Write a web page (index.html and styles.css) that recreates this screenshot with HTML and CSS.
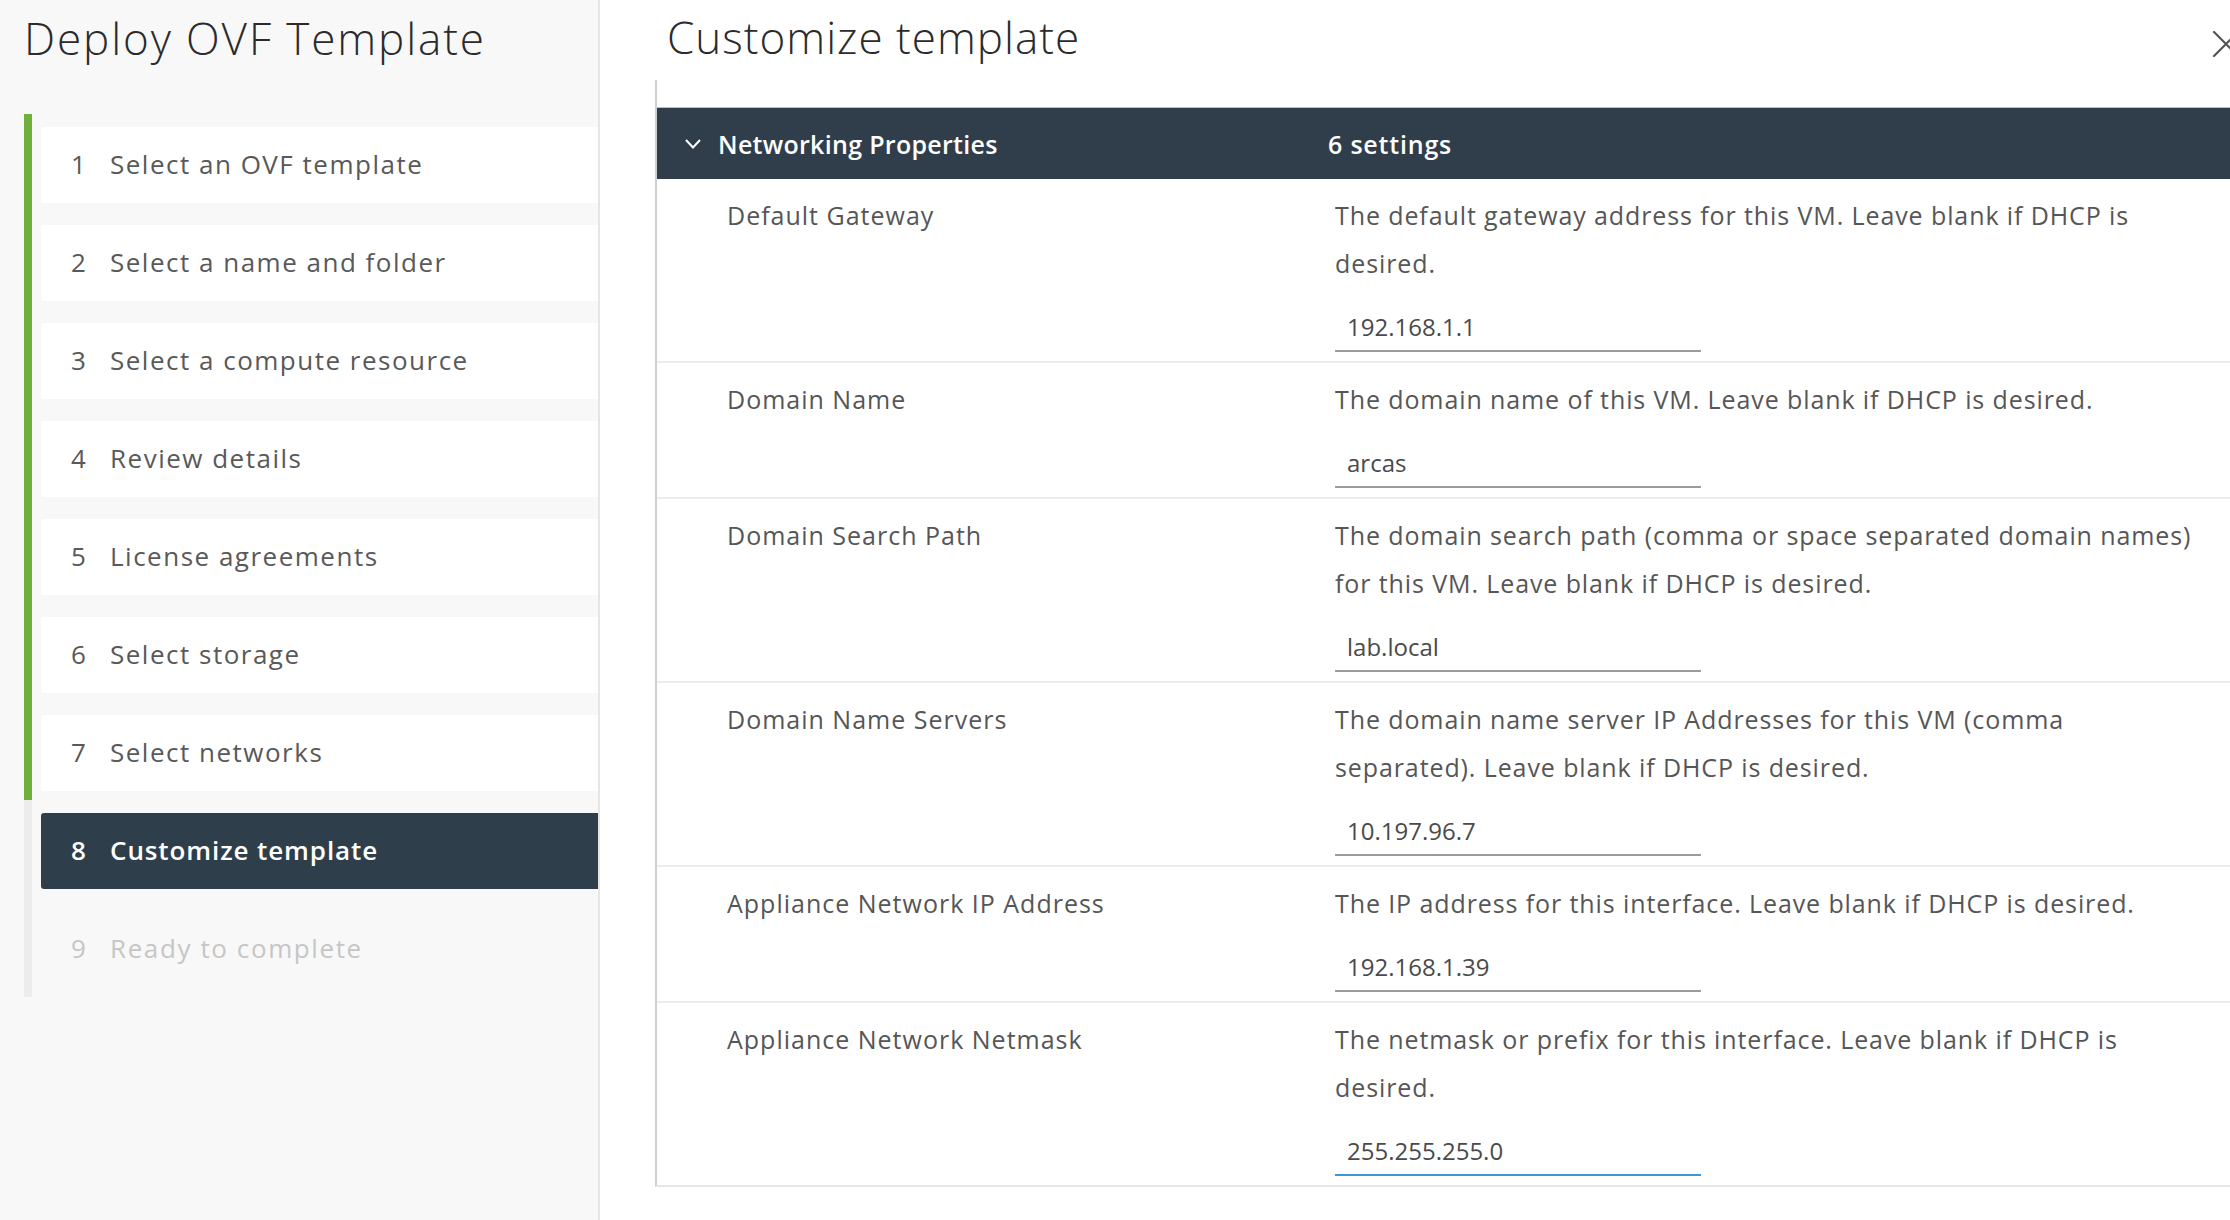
FILE: index.html
```html
<!DOCTYPE html>
<html lang="en">
<head>
<meta charset="utf-8">
<title>Deploy OVF Template</title>
<link rel="stylesheet" href="styles.css">
</head>
<body>
<div class="app">
  <aside class="sidebar">
    <h1 class="wiz-title">Deploy OVF Template</h1>
    <div class="steps">
      <div class="track"><div class="track-done"></div></div>
      <ol class="step-list">
        <li class="step"><span class="num">1</span><span>Select an OVF template</span></li>
        <li class="step"><span class="num">2</span><span>Select a name and folder</span></li>
        <li class="step"><span class="num">3</span><span>Select a compute resource</span></li>
        <li class="step"><span class="num">4</span><span>Review details</span></li>
        <li class="step"><span class="num">5</span><span>License agreements</span></li>
        <li class="step"><span class="num">6</span><span>Select storage</span></li>
        <li class="step"><span class="num">7</span><span>Select networks</span></li>
        <li class="step active"><span class="num">8</span><span>Customize template</span></li>
        <li class="step disabled"><span class="num">9</span><span>Ready to complete</span></li>
      </ol>
    </div>
  </aside>
  <main class="main">
    <div class="main-head">
      <h2 class="page-title">Customize template</h2>
      <svg class="close" width="28" height="28" viewBox="0 0 28 28" aria-label="Close">
        <path d="M2 2 L26 26 M26 2 L2 26" stroke="#555" stroke-width="2.2" fill="none" stroke-linecap="round"/>
      </svg>
    </div>
    <div class="props">
      <div class="props-head">
        <div class="ph-name">
          <svg class="chev" width="18" height="12" viewBox="0 0 18 12"><path d="M2 2 L9 9.5 L16 2" stroke="#fff" stroke-width="2" fill="none"/></svg>
          <span>Networking Properties</span>
        </div>
        <div class="ph-count">6 settings</div>
      </div>

      <div class="prop">
        <div class="p-label">Default Gateway</div>
        <div class="p-body">
          <div class="p-desc">The default gateway address for this VM. Leave blank if DHCP is<br>desired.</div>
          <input class="p-input" type="text" value="192.168.1.1">
        </div>
      </div>

      <div class="prop">
        <div class="p-label">Domain Name</div>
        <div class="p-body">
          <div class="p-desc">The domain name of this VM. Leave blank if DHCP is desired.</div>
          <input class="p-input" type="text" value="arcas">
        </div>
      </div>

      <div class="prop">
        <div class="p-label">Domain Search Path</div>
        <div class="p-body">
          <div class="p-desc">The domain search path (comma or space separated domain names)<br>for this VM. Leave blank if DHCP is desired.</div>
          <input class="p-input" type="text" value="lab.local">
        </div>
      </div>

      <div class="prop">
        <div class="p-label">Domain Name Servers</div>
        <div class="p-body">
          <div class="p-desc">The domain name server IP Addresses for this VM (comma<br>separated). Leave blank if DHCP is desired.</div>
          <input class="p-input" type="text" value="10.197.96.7">
        </div>
      </div>

      <div class="prop">
        <div class="p-label">Appliance Network IP Address</div>
        <div class="p-body">
          <div class="p-desc">The IP address for this interface. Leave blank if DHCP is desired.</div>
          <input class="p-input" type="text" value="192.168.1.39">
        </div>
      </div>

      <div class="prop">
        <div class="p-label">Appliance Network Netmask</div>
        <div class="p-body">
          <div class="p-desc">The netmask or prefix for this interface. Leave blank if DHCP is<br>desired.</div>
          <input class="p-input focused" type="text" value="255.255.255.0">
        </div>
      </div>
    </div>
  </main>
</div>
</body>
</html>
```

FILE: styles.css
```css
* { box-sizing: border-box; }

html, body {
  margin: 0;
  padding: 0;
  background: #ffffff;
  overflow: hidden;
}

body {
  font-family: "Open Sans", Lato, sans-serif;
  color: #565656;
}

.app {
  display: flex;
  width: 2260px;
  height: 1220px;
}

/* ---------- sidebar ---------- */
.sidebar {
  width: 600px;
  flex: none;
  background: #f8f8f8;
  border-right: 2px solid #e6e6e6;
  padding-top: 8px;
}

.wiz-title {
  margin: 0 0 46px 24px;
  font-size: 44px;
  font-weight: 300;
  line-height: 60px;
  color: #2b2b2b;
  letter-spacing: 1.9px;
}

.steps {
  display: flex;
  margin-left: 24px;
}

.track {
  width: 8px;
  flex: none;
  background: #ececec;
}

.track-done {
  height: 686px;
  background: #6fb03c;
}

.step-list {
  list-style: none;
  margin: 0 0 0 9px;
  padding: 13px 0 10px 0;
  flex: 1;
  display: flex;
  flex-direction: column;
  gap: 22px;
}

.step {
  height: 76px;
  display: flex;
  align-items: center;
  padding-left: 30px;
  padding-bottom: 2px;
  background: #ffffff;
  font-size: 26px;
  color: #595959;
  letter-spacing: 1.5px;
  border-radius: 3px 0 0 3px;
}

.step .num {
  width: 39px;
  flex: none;
  letter-spacing: 0;
}

.step.active {
  background: #2f3e4b;
  color: #ffffff;
  font-weight: 600;
  letter-spacing: 0.9px;
}

.step.disabled {
  background: transparent;
  color: #c6c6c6;
  letter-spacing: 1.6px;
}

/* ---------- main ---------- */
.main {
  flex: 1;
  display: flex;
  flex-direction: column;
}

.main-head {
  display: flex;
  align-items: center;
  justify-content: space-between;
  height: 80px;
  padding: 0 20px 0 67px;
}

.page-title {
  margin: 0;
  font-size: 44px;
  font-weight: 300;
  line-height: 60px;
  color: #2b2b2b;
  letter-spacing: 1px;
  align-self: flex-start;
  padding-top: 7px;
}

.close {
  align-self: flex-start;
  margin-top: 30px;
}

.props {
  margin-left: 55px;
  border-left: 2px solid #cfcfcf;
  border-bottom: 2px solid #e6e6e6;
  padding-top: 27px;
}

.props-head {
  display: flex;
  align-items: center;
  height: 72px;
  background: #303e4c;
  border-top: 1px solid #b9bfc5;
  color: #ffffff;
  font-size: 25px;
  font-weight: 600;
  letter-spacing: 0.3px;
}

.ph-name {
  width: 671px;
  flex: none;
  display: flex;
  align-items: center;
  padding-left: 27px;
}

.chev {
  margin-right: 16px;
}

.ph-count {
  letter-spacing: 0.8px;
}

.prop {
  display: flex;
  padding: 12px 0 9px 0;
  border-bottom: 2px solid #ececec;
}

.prop:last-child {
  border-bottom: none;
}

.p-label {
  width: 678px;
  flex: none;
  padding-left: 70px;
  font-size: 25px;
  line-height: 48px;
  color: #565656;
  letter-spacing: 1px;
}

.p-body {
  display: flex;
  flex-direction: column;
}

.p-desc {
  font-size: 25px;
  line-height: 48px;
  color: #565656;
  letter-spacing: 0.9px;
  white-space: nowrap;
}

.p-input {
  margin-top: 22px;
  width: 366px;
  height: 43px;
  border: none;
  border-bottom: 2px solid #9b9b9b;
  background: transparent;
  padding: 0 0 6px 12px;
  font-family: "Open Sans", Lato, sans-serif;
  font-size: 24px;
  line-height: 34px;
  color: #4a4a4a;
  outline: none;
}

.p-input.focused {
  border-bottom-color: #3c98da;
}
```
